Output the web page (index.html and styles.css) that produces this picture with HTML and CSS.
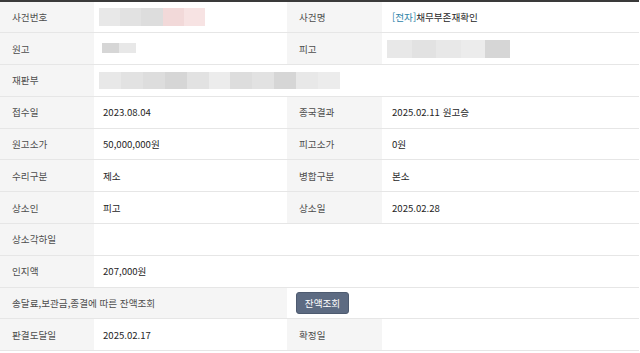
FILE: index.html
```html
<!DOCTYPE html>
<html lang="ko">
<head>
<meta charset="utf-8">
<link rel="stylesheet" href="styles.css">
</head>
<body>
<table class="info">
  <colgroup>
    <col class="c1"><col class="c2"><col class="c3"><col class="c4">
  </colgroup>
  <tr>
    <th>사건번호</th>
    <td><span class="blur b1"><i class="g1"></i><i class="g2"></i><i class="g3"></i><i class="p1"></i><i class="p2"></i></span></td>
    <th>사건명</th>
    <td><span class="tag">[전자]</span>채무부존재확인</td>
  </tr>
  <tr>
    <th>원고</th>
    <td><span class="blur b2"><i class="g4"></i><i class="g1"></i></span></td>
    <th>피고</th>
    <td><span class="blur b3"><i class="g1"></i><i class="g2"></i><i class="g1"></i><i class="g5"></i><i class="g4"></i></span></td>
  </tr>
  <tr>
    <th>재판부</th>
    <td colspan="3"><span class="blur b4"><i class="g1"></i><i class="g2"></i><i class="g3"></i><i class="g4"></i><i class="g2"></i><i class="g5"></i><i class="g3"></i><i class="g2"></i><i class="g4"></i><i class="g1"></i><i class="g5"></i></span></td>
  </tr>
  <tr>
    <th>접수일</th>
    <td>2023.08.04</td>
    <th>종국결과</th>
    <td>2025.02.11 원고승</td>
  </tr>
  <tr>
    <th>원고소가</th>
    <td>50,000,000원</td>
    <th>피고소가</th>
    <td>0원</td>
  </tr>
  <tr>
    <th>수리구분</th>
    <td>제소</td>
    <th>병합구분</th>
    <td>본소</td>
  </tr>
  <tr>
    <th>상소인</th>
    <td>피고</td>
    <th>상소일</th>
    <td>2025.02.28</td>
  </tr>
  <tr>
    <th>상소각하일</th>
    <td colspan="3"></td>
  </tr>
  <tr>
    <th>인지액</th>
    <td colspan="3">207,000원</td>
  </tr>
  <tr>
    <th colspan="2">송달료,보관금,종결에 따른 잔액조회</th>
    <td colspan="2"><button class="btn" type="button">잔액조회</button></td>
  </tr>
  <tr>
    <th>판결도달일</th>
    <td>2025.02.17</td>
    <th>확정일</th>
    <td></td>
  </tr>
</table>
</body>
</html>
```

FILE: styles.css
```css
html, body {
  margin: 0;
  padding: 0;
  background: #ffffff;
}

body {
  font-family: "Noto Sans CJK KR", "Noto Sans", sans-serif;
  font-size: 9.6px;
  color: #262626;
}

.info {
  width: 639px;
  border-collapse: collapse;
  table-layout: fixed;
  border-top: 2px solid #3a3a3a;
}

.c1 { width: 94px; }
.c2 { width: 193px; }
.c3 { width: 95px; }
.c4 { width: 257px; }

.info tr {
  height: 31.8px;
}

.info th,
.info td {
  border-bottom: 1px solid #e6e6e6;
  padding: 0 0 0 10px;
  text-align: left;
  vertical-align: middle;
  line-height: 14px;
}

.info th {
  background: #f5f5f5;
  color: #4d4d4d;
  font-weight: normal;
  padding-left: 12px;
}

.info td {
  padding-left: 9px;
}

.info td:nth-child(4) {
  padding-left: 10px;
}

.tag {
  color: #2f84a8;
}

.blur {
  display: inline-flex;
  vertical-align: middle;
}

.blur i {
  display: block;
  height: 100%;
  flex: 1;
}

.b1 { height: 18px; width: 106px; margin-left: -4px; }
.b2 { height: 10px; width: 34px; margin-left: -1px; margin-top: -4px; }
.b3 { height: 18px; width: 123px; margin-left: -5px; }
.b4 { height: 17px; width: 241px; margin-left: -4px; }

.g1 { background: #e8e8e8; }
.g2 { background: #e2e2e2; }
.g3 { background: #dddddd; }
.g4 { background: #d6d6d6; }
.g5 { background: #ececec; }
.p1 { background: #f2d9d9; }
.p2 { background: #f7e3e3; }

.btn {
  font-family: "Noto Sans CJK KR", "Noto Sans", sans-serif;
  font-size: 9.6px;
  color: #ffffff;
  background: #5d6b82;
  border: 1px solid #4e5b70;
  border-radius: 3px;
  width: 53px;
  height: 22px;
  padding: 0;
  line-height: 20px;
  cursor: pointer;
}
```
